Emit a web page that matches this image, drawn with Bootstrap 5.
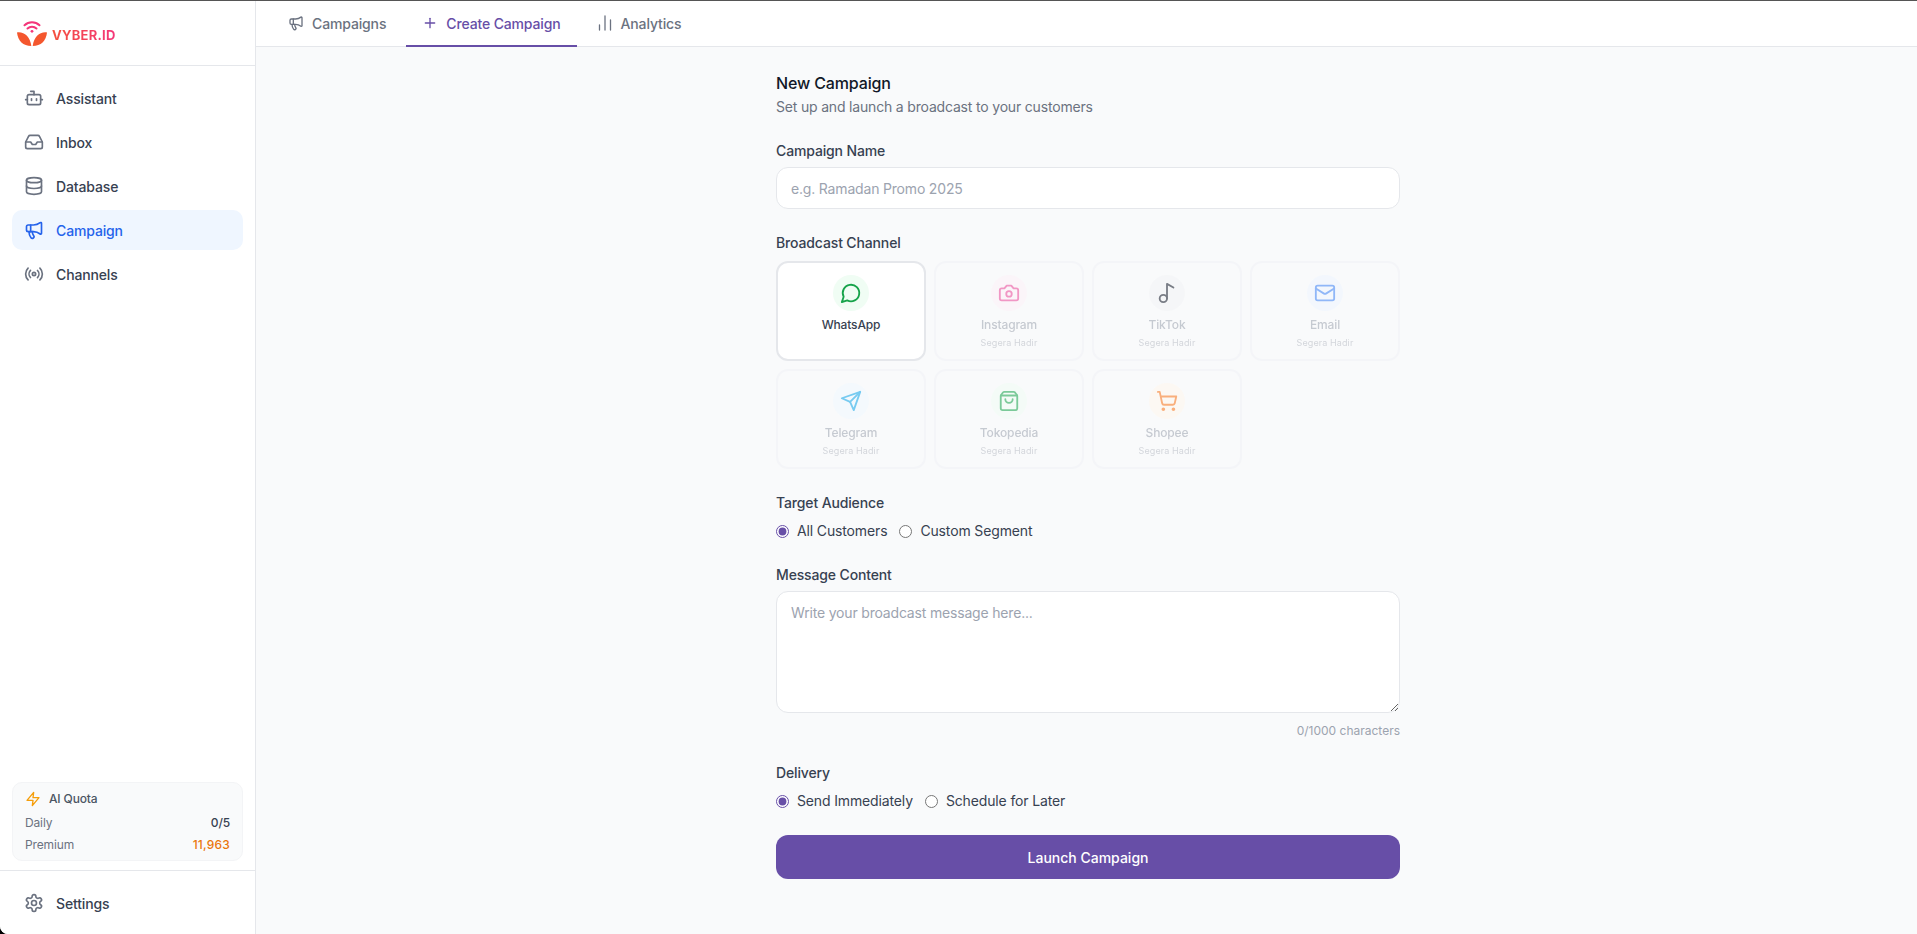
<!DOCTYPE html>
<html lang="en">
<head>
    <meta charset="UTF-8">
    <meta name="viewport" content="width=device-width, initial-scale=1.0">
    <link rel="stylesheet" href="https://cdn.jsdelivr.net/npm/bootstrap@5.3.3/dist/css/bootstrap.min.css">
    <title>New Campaign</title>
    <style>
        html, body { height: 100%; overflow: hidden; }
        body { font-family: Inter, "Liberation Sans", sans-serif; font-size: 14px; letter-spacing: -.14px; color: #374151; background: #000; }
        svg.ico { width: 20px; height: 20px; fill: none; stroke: currentColor; stroke-width: 2; stroke-linecap: round; stroke-linejoin: round; flex: none; }
        svg.ico-16 { width: 16px; height: 16px; }
        svg.ico-22 { width: 22px; height: 22px; }

        .app-shell { height: 100%; background: #f9fafb; border-top: 1px solid #555; border-bottom-left-radius: 8px; overflow: hidden; }
        .side-bar { width: 256px; flex: none; background: #fff; border-right: 1px solid #e5e7eb; }
        .logo-box { height: 65px; border-bottom: 1px solid #e5e7eb; padding-left: 17px; gap: 5px; }
        .logo-text { font-size: 13px; font-weight: 700; letter-spacing: .25px; margin-top: 6px; background: linear-gradient(90deg, #f4503c, #f4367a); -webkit-background-clip: text; background-clip: text; color: transparent; }
        .side-nav { padding: 12px; }
        .side-link { height: 40px; padding: 0 12px; gap: 12px; border-radius: 10px; color: #374151; font-weight: 450; text-decoration: none; }
        .side-link svg { color: #6b7280; }
        .side-link.is-active { background: #eff6ff; color: #2563eb; }
        .side-link.is-active svg { color: #2563eb; }
        .quota-box { margin: 0 12px 9px; padding: 5px 12px 4px; background: #f9fafb; border: 1px solid #f3f4f6; border-radius: 10px; font-size: 12px; line-height: 22px; color: #6b7280; }
        .quota-head { color: #4b5563; font-weight: 450; gap: 8px; margin-bottom: 2px; }
        .quota-val { font-weight: 550; color: #374151; }
        .quota-val.is-orange { color: #ea760c; letter-spacing: .2px; }
        .side-foot { border-top: 1px solid #e5e7eb; padding: 12px 12px 11px; }

        .tab-bar { height: 46px; background: #fff; border-bottom: 1px solid #e5e7eb; padding-left: 16px; gap: 4px; flex: none; }
        .tab-item { height: 46px; padding: 0 16px; gap: 8px; color: #6b7280; font-weight: 450; text-decoration: none; border-bottom: 2px solid transparent; }
        .tab-item.is-active { color: #674ea7; border-bottom-color: #674ea7; }
        .tab-bars { fill: none; stroke: currentColor; stroke-width: 1.3; stroke-linecap: round; flex: none; }

        .form-wrap { width: 624px; margin-left: 520px; padding-top: 24px; }
        .form-title { font-size: 16px; line-height: 24px; font-weight: 500; color: #111827; margin: 0 0 2px; }
        .form-sub { line-height: 20px; color: #6b7280; margin: 0 0 24px; letter-spacing: -.18px; }
        .field-label { display: block; line-height: 20px; font-weight: 450; color: #374151; margin-bottom: 6px; }
        .form-control.field-input { font-size: 14px; letter-spacing: -.18px; border: 1px solid #e5e7eb; border-radius: 12px; padding: 10px 14px; color: #374151; background: #fff; }
        .field-input::placeholder { color: #9ca3af; }
        .field-input:focus { box-shadow: none; border-color: #e5e7eb; }
        .name-input { height: 42px; margin-bottom: 24px; }
        .msg-input { height: 122px; }

        .chan-card { height: 100px; border: 2px solid #f4f5f8; border-radius: 12px; padding-top: 12px; text-align: center; }
        .chan-card.is-on { background: #fff; border-color: #e5e7eb; }
        .chan-card.is-off .chan-inner { opacity: .55; }
        .chan-round { width: 36px; height: 36px; border-radius: 50%; margin: 0 auto 6px; }
        .chan-name { font-size: 12px; line-height: 16px; font-weight: 450; color: #374151; }
        .is-off .chan-name { color: #9ca3af; }
        .chan-soon { font-size: 9px; line-height: 12px; margin-top: 4px; color: #b4b8c1; letter-spacing: .1px; }

        .radio-row { gap: 12px; height: 20px; margin-bottom: 24px; }
        .radio-row label { gap: 8px; margin: 0; font-size: 14px; line-height: 20px; color: #374151; }
        .radio-row input { width: 13px; height: 13px; margin: 0; accent-color: #674ea7; }
        .count-note { font-size: 12px; line-height: 16px; letter-spacing: 0; color: #9ca3af; text-align: right; margin: 10px 0 24px; }
        .btn.launch-btn { height: 44px; background: #674ea7; border: 0; border-radius: 12px; color: #fff; font-size: 14px; font-weight: 500; }
        .bg-green { background: #f0fdf4; color: #16a34a; }
        .bg-pink { background: #fdf2f8; color: #ec4899; }
        .bg-gray { background: #f3f4f6; color: #111827; }
        .bg-blue { background: #eff6ff; color: #3b82f6; }
        .bg-sky { background: #f0f9ff; color: #0ea5e9; }
        .bg-orange { background: #fff7ed; color: #f97316; }
    </style>
</head>
<body>
<div class="app-shell d-flex">
    <aside class="side-bar d-flex flex-column">
        <div class="logo-box d-flex align-items-center">
            <svg width="30" height="25" viewBox="0 0 30 25">
                <path d="M7.500 4.300a11 11 0 0 1 15 0M10.500 7.500a6.600 6.600 0 0 1 9 0" fill="none" stroke="#f4367a" stroke-width="2" stroke-linecap="round"/>
                <circle cx="15" cy="10.300" r="1.400" fill="#f4367a"/>
                <path d="M0 11.500c7-1 13 4 14.300 13.500C6 25 1 20 0 11.500z" fill="#f4572e"/>
                <path d="M30 11.500c-7-1-13 4-14.300 13.500C24 25 29 20 30 11.500z" fill="#f4572e"/>
            </svg>
            <span class="logo-text">VYBER.ID</span>
        </div>
        <nav class="side-nav d-flex flex-column gap-1 flex-grow-1">
            <a href="#" class="side-link d-flex align-items-center">
                <svg class="ico" viewBox="0 0 24 24"><path d="M12 8V4H8"/><rect width="16" height="12" x="4" y="8" rx="2"/><path d="M2 14h2"/><path d="M20 14h2"/><path d="M15 13v2"/><path d="M9 13v2"/></svg>Assistant</a>
            <a href="#" class="side-link d-flex align-items-center">
                <svg class="ico" viewBox="0 0 24 24"><polyline points="22 12 16 12 14 15 10 15 8 12 2 12"/><path d="M5.450 5.110 2 12v6a2 2 0 0 0 2 2h16a2 2 0 0 0 2-2v-6l-3.450-6.890A2 2 0 0 0 16.760 4H7.240a2 2 0 0 0-1.790 1.110z"/></svg>Inbox</a>
            <a href="#" class="side-link d-flex align-items-center">
                <svg class="ico" viewBox="0 0 24 24"><ellipse cx="12" cy="5" rx="9" ry="3"/><path d="M3 5V19A9 3 0 0 0 21 19V5"/><path d="M3 12A9 3 0 0 0 21 12"/></svg>Database</a>
            <a href="#" class="side-link is-active d-flex align-items-center">
                <svg class="ico" viewBox="0 0 24 24"><path d="M11 6a13 13 0 0 0 8.400-2.800A1 1 0 0 1 21 4v12a1 1 0 0 1-1.600.8A13 13 0 0 0 11 14H5a2 2 0 0 1-2-2V8a2 2 0 0 1 2-2z"/><path d="M6 14a12 12 0 0 0 2.400 7.200 2 2 0 0 0 3.200-2.400A8 8 0 0 1 10 14"/><path d="M8 6v8"/></svg>Campaign</a>
            <a href="#" class="side-link d-flex align-items-center">
                <svg class="ico" viewBox="0 0 24 24"><path d="M4.900 19.100C1 15.200 1 8.800 4.900 4.900"/><path d="M7.800 16.200c-2.300-2.300-2.300-6.100 0-8.500"/><circle cx="12" cy="12" r="2"/><path d="M16.200 7.800c2.300 2.300 2.300 6.100 0 8.500"/><path d="M19.100 4.900C23 8.800 23 15.100 19.100 19"/></svg>Channels</a>
        </nav>
        <div class="quota-box">
            <div class="quota-head d-flex align-items-center">
                <svg class="ico ico-16" viewBox="0 0 24 24" style="color:#f59e0b"><polygon points="13 2 3 14 12 14 11 22 21 10 12 10 13 2"/></svg>AI Quota</div>
            <div class="d-flex justify-content-between"><span>Daily</span><span class="quota-val">0/5</span></div>
            <div class="d-flex justify-content-between"><span>Premium</span><span class="quota-val is-orange">11,963</span></div>
        </div>
        <div class="side-foot">
            <a href="#" class="side-link d-flex align-items-center">
                <svg class="ico" viewBox="0 0 24 24"><path d="M12.220 2h-.44a2 2 0 0 0-2 2v.18a2 2 0 0 1-1 1.730l-.43.25a2 2 0 0 1-2 0l-.15-.08a2 2 0 0 0-2.730.73l-.22.38a2 2 0 0 0 .73 2.730l.15.1a2 2 0 0 1 1 1.720v.51a2 2 0 0 1-1 1.740l-.15.09a2 2 0 0 0-.73 2.730l.22.38a2 2 0 0 0 2.730.73l.15-.08a2 2 0 0 1 2 0l.43.25a2 2 0 0 1 1 1.730V20a2 2 0 0 0 2 2h.44a2 2 0 0 0 2-2v-.18a2 2 0 0 1 1-1.730l.43-.25a2 2 0 0 1 2 0l.15.08a2 2 0 0 0 2.730-.73l.22-.39a2 2 0 0 0-.73-2.730l-.15-.08a2 2 0 0 1-1-1.740v-.5a2 2 0 0 1 1-1.740l.15-.09a2 2 0 0 0 .73-2.730l-.22-.38a2 2 0 0 0-2.730-.73l-.15.08a2 2 0 0 1-2 0l-.43-.25a2 2 0 0 1-1-1.730V4a2 2 0 0 0-2-2z"/><circle cx="12" cy="12" r="3"/></svg>Settings</a>
        </div>
    </aside>

    <main class="flex-grow-1 d-flex flex-column">
        <div class="tab-bar d-flex">
            <a href="#" class="tab-item d-flex align-items-center">
                <svg class="ico ico-16" viewBox="0 0 24 24"><path d="M11 6a13 13 0 0 0 8.400-2.800A1 1 0 0 1 21 4v12a1 1 0 0 1-1.600.8A13 13 0 0 0 11 14H5a2 2 0 0 1-2-2V8a2 2 0 0 1 2-2z"/><path d="M6 14a12 12 0 0 0 2.400 7.200 2 2 0 0 0 3.200-2.400A8 8 0 0 1 10 14"/><path d="M8 6v8"/></svg>Campaigns</a>
            <a href="#" class="tab-item is-active d-flex align-items-center">
                <svg class="ico ico-16" viewBox="0 0 24 24"><path d="M5 12h14"/><path d="M12 5v14"/></svg>Create Campaign</a>
            <a href="#" class="tab-item d-flex align-items-center">
                <svg class="tab-bars" width="16" height="16" viewBox="0 0 16 16"><path d="M2.500 15v-5"/><path d="M8 15V1"/><path d="M13.500 15V5"/></svg>Analytics</a>
        </div>

        <div class="form-wrap">
            <h1 class="form-title">New Campaign</h1>
            <p class="form-sub">Set up and launch a broadcast to your customers</p>

            <label class="field-label" for="camp-name">Campaign Name</label>
            <input id="camp-name" class="form-control field-input name-input" placeholder="e.g. Ramadan Promo 2025">

            <div class="field-label" style="margin-bottom:8px">Broadcast Channel</div>
            <div class="row row-cols-4 g-2" style="margin-bottom:24px">
                <div class="col"><div class="chan-card is-on">
                    <div class="chan-round bg-green d-flex align-items-center justify-content-center"><svg class="ico ico-22" viewBox="0 0 24 24"><path d="M7.900 20A9 9 0 1 0 4 16.100L2 22Z"/></svg></div>
                    <div class="chan-name">WhatsApp</div>
                </div></div>
                <div class="col"><div class="chan-card is-off"><div class="chan-inner">
                    <div class="chan-round bg-pink d-flex align-items-center justify-content-center"><svg class="ico ico-22" viewBox="0 0 24 24"><path d="M14.500 4h-5L7 7H4a2 2 0 0 0-2 2v9a2 2 0 0 0 2 2h16a2 2 0 0 0 2-2V9a2 2 0 0 0-2-2h-3l-2.500-3z"/><circle cx="12" cy="13" r="3"/></svg></div>
                    <div class="chan-name">Instagram</div><div class="chan-soon">Segera Hadir</div>
                </div></div></div>
                <div class="col"><div class="chan-card is-off"><div class="chan-inner">
                    <div class="chan-round bg-gray d-flex align-items-center justify-content-center"><svg class="ico ico-22" viewBox="0 0 24 24"><circle cx="8" cy="18" r="4"/><path d="M12 18V2l7 4"/></svg></div>
                    <div class="chan-name">TikTok</div><div class="chan-soon">Segera Hadir</div>
                </div></div></div>
                <div class="col"><div class="chan-card is-off"><div class="chan-inner">
                    <div class="chan-round bg-blue d-flex align-items-center justify-content-center"><svg class="ico ico-22" viewBox="0 0 24 24"><rect width="20" height="16" x="2" y="4" rx="2"/><path d="m22 7-8.970 5.700a1.940 1.940 0 0 1-2.060 0L2 7"/></svg></div>
                    <div class="chan-name">Email</div><div class="chan-soon">Segera Hadir</div>
                </div></div></div>
                <div class="col"><div class="chan-card is-off"><div class="chan-inner">
                    <div class="chan-round bg-sky d-flex align-items-center justify-content-center"><svg class="ico ico-22" viewBox="0 0 24 24"><path d="m22 2-7 20-4-9-9-4Z"/><path d="M22 2 11 13"/></svg></div>
                    <div class="chan-name">Telegram</div><div class="chan-soon">Segera Hadir</div>
                </div></div></div>
                <div class="col"><div class="chan-card is-off"><div class="chan-inner">
                    <div class="chan-round bg-green d-flex align-items-center justify-content-center"><svg class="ico ico-22" viewBox="0 0 24 24"><path d="M16 10a4 4 0 0 1-8 0"/><path d="M3.103 6.034h17.794"/><path d="M3.400 5.467a2 2 0 0 0-.4 1.200V20a2 2 0 0 0 2 2h14a2 2 0 0 0 2-2V6.667a2 2 0 0 0-.4-1.200l-2.100-2.800A2 2 0 0 0 17 2H7a2 2 0 0 0-1.600.8z"/></svg></div>
                    <div class="chan-name">Tokopedia</div><div class="chan-soon">Segera Hadir</div>
                </div></div></div>
                <div class="col"><div class="chan-card is-off"><div class="chan-inner">
                    <div class="chan-round bg-orange d-flex align-items-center justify-content-center"><svg class="ico ico-22" viewBox="0 0 24 24"><circle cx="8" cy="21" r="1"/><circle cx="19" cy="21" r="1"/><path d="M2.050 2.050h2l2.660 12.420a2 2 0 0 0 2 1.580h9.780a2 2 0 0 0 1.950-1.570l1.650-7.430H5.120"/></svg></div>
                    <div class="chan-name">Shopee</div><div class="chan-soon">Segera Hadir</div>
                </div></div></div>
            </div>

            <div class="field-label" style="margin-bottom:8px">Target Audience</div>
            <div class="radio-row d-flex align-items-center">
                <label class="d-flex align-items-center"><input type="radio" name="aud" checked>All Customers</label>
                <label class="d-flex align-items-center"><input type="radio" name="aud">Custom Segment</label>
            </div>

            <label class="field-label" for="camp-msg">Message Content</label>
            <textarea id="camp-msg" class="form-control field-input msg-input" placeholder="Write your broadcast message here..."></textarea>
            <div class="count-note">0/1000 characters</div>

            <div class="field-label" style="margin-bottom:8px">Delivery</div>
            <div class="radio-row d-flex align-items-center">
                <label class="d-flex align-items-center"><input type="radio" name="del" checked>Send Immediately</label>
                <label class="d-flex align-items-center"><input type="radio" name="del">Schedule for Later</label>
            </div>

            <button class="btn launch-btn w-100">Launch Campaign</button>
        </div>
    </main>
</div>
<script src="https://cdn.jsdelivr.net/npm/bootstrap@5.3.3/dist/js/bootstrap.bundle.min.js"></script>
</body>
</html>
